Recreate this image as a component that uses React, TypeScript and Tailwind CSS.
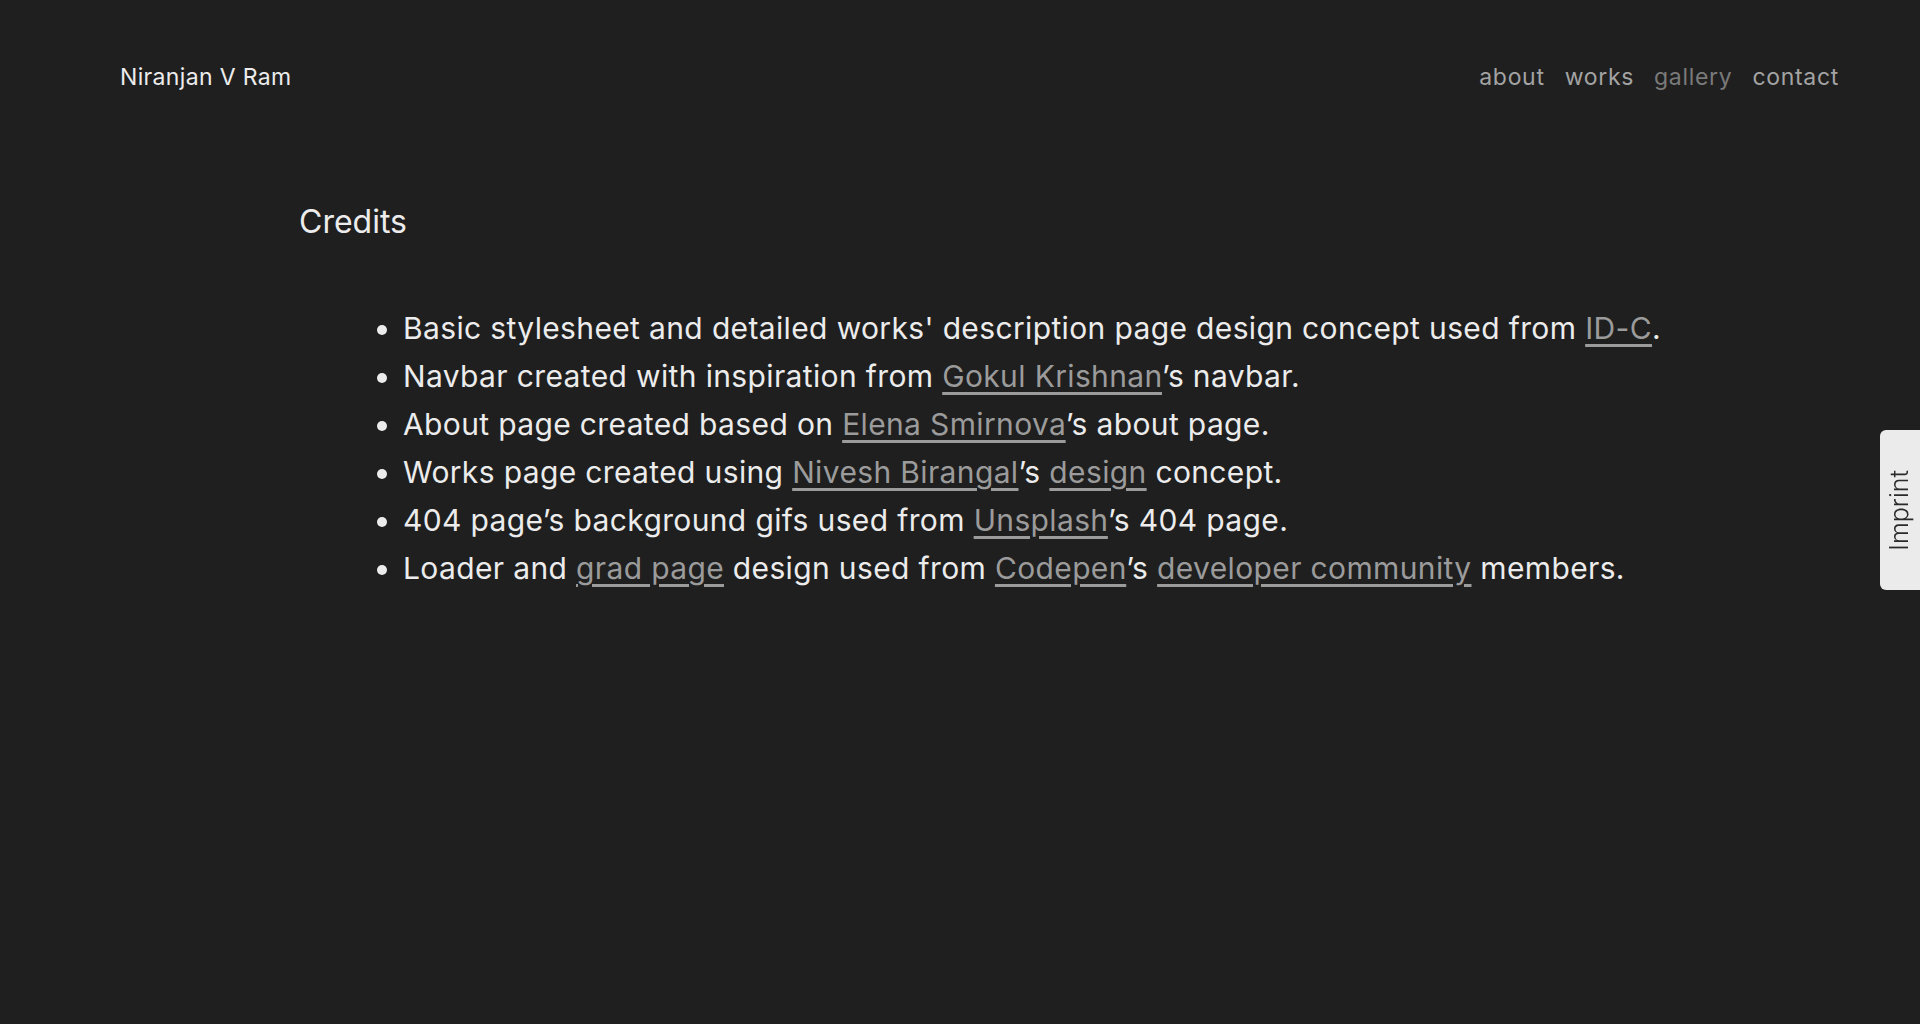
const nav = [
  { label: 'about', active: false },
  { label: 'works', active: false },
  { label: 'gallery', active: true },
  { label: 'contact', active: false },
]

const Link = ({ children }: { children: React.ReactNode }) => (
  <a href="#" className="text-[#9b9b9b] underline decoration-[#9b9b9b] decoration-[2.5px] underline-offset-[5px]">
    {children}
  </a>
)

export default function App() {
  return (
    <div className="min-h-screen bg-[#1f1f1f] text-[#ececec] font-['Inter','Noto_Sans',sans-serif]">
      <header className="flex h-[154px] items-center justify-between pl-[120px] pr-[81px]">
        <a href="#" className="text-[23px] tracking-[0.015em] text-[#ececec]">Niranjan V Ram</a>
        <nav className="flex gap-[20px] text-[23px] tracking-[0.03em]">
          {nav.map((item) => (
            <a key={item.label} href="#" className={item.active ? 'text-[#7a7a7a]' : 'text-[#a3a3a3]'}>
              {item.label}
            </a>
          ))}
        </nav>
      </header>

      <main className="pl-[299px]">
        <h2 className="mt-[44px] text-[32px] leading-[48px]">Credits</h2>
        <ul className="mt-[58px] list-disc pl-[104px] text-[30px] leading-[48px] tracking-[0.012em] marker:text-[#ececec]">
          <li>Basic stylesheet and detailed works' description page design concept used from <Link>ID-C</Link>.</li>
          <li>Navbar created with inspiration from <Link>Gokul Krishnan</Link>’s navbar.</li>
          <li>About page created based on <Link>Elena Smirnova</Link>’s about page.</li>
          <li>Works page created using <Link>Nivesh Birangal</Link>’s <Link>design</Link> concept.</li>
          <li>404 page’s background gifs used from <Link>Unsplash</Link>’s 404 page.</li>
          <li>Loader and <Link>grad page</Link> design used from <Link>Codepen</Link>’s <Link>developer community</Link> members.</li>
        </ul>
      </main>

      <a
        href="#"
        className="fixed right-0 top-[430px] flex h-[160px] w-[40px] items-center justify-center rounded-l-[6px] bg-[#ebebeb] text-[#2a2a2a]"
      >
        <span className="rotate-180 text-[25px] font-light [writing-mode:vertical-rl]">Imprint</span>
      </a>
    </div>
  )
}
